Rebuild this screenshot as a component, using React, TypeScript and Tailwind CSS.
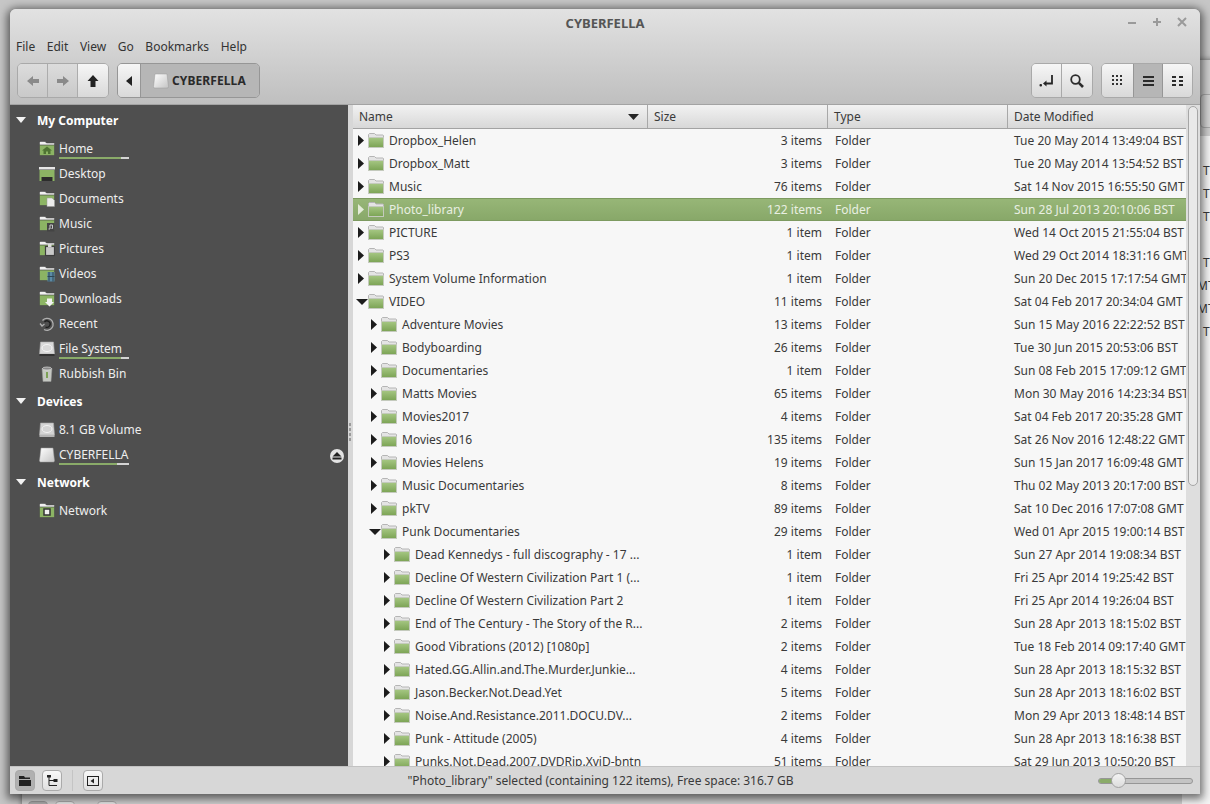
import type { ReactNode } from 'react';

type Row = { name: string; size: string; date: string; depth: number; open?: boolean; selected?: boolean };

const ROWS: Row[] = [
  { name: 'Dropbox_Helen', size: '3 items', date: 'Tue 20 May 2014 13:49:04 BST', depth: 0 },
  { name: 'Dropbox_Matt', size: '3 items', date: 'Tue 20 May 2014 13:54:52 BST', depth: 0 },
  { name: 'Music', size: '76 items', date: 'Sat 14 Nov 2015 16:55:50 GMT', depth: 0 },
  { name: 'Photo_library', size: '122 items', date: 'Sun 28 Jul 2013 20:10:06 BST', depth: 0, selected: true },
  { name: 'PICTURE', size: '1 item', date: 'Wed 14 Oct 2015 21:55:04 BST', depth: 0 },
  { name: 'PS3', size: '1 item', date: 'Wed 29 Oct 2014 18:31:16 GMT', depth: 0 },
  { name: 'System Volume Information', size: '1 item', date: 'Sun 20 Dec 2015 17:17:54 GMT', depth: 0 },
  { name: 'VIDEO', size: '11 items', date: 'Sat 04 Feb 2017 20:34:04 GMT', depth: 0, open: true },
  { name: 'Adventure Movies', size: '13 items', date: 'Sun 15 May 2016 22:22:52 BST', depth: 1 },
  { name: 'Bodyboarding', size: '26 items', date: 'Tue 30 Jun 2015 20:53:06 BST', depth: 1 },
  { name: 'Documentaries', size: '1 item', date: 'Sun 08 Feb 2015 17:09:12 GMT', depth: 1 },
  { name: 'Matts Movies', size: '65 items', date: 'Mon 30 May 2016 14:23:34 BST', depth: 1 },
  { name: 'Movies2017', size: '4 items', date: 'Sat 04 Feb 2017 20:35:28 GMT', depth: 1 },
  { name: 'Movies 2016', size: '135 items', date: 'Sat 26 Nov 2016 12:48:22 GMT', depth: 1 },
  { name: 'Movies Helens', size: '19 items', date: 'Sun 15 Jan 2017 16:09:48 GMT', depth: 1 },
  { name: 'Music Documentaries', size: '8 items', date: 'Thu 02 May 2013 20:17:00 BST', depth: 1 },
  { name: 'pkTV', size: '89 items', date: 'Sat 10 Dec 2016 17:07:08 GMT', depth: 1 },
  { name: 'Punk Documentaries', size: '29 items', date: 'Wed 01 Apr 2015 19:00:14 BST', depth: 1, open: true },
  { name: 'Dead Kennedys - full discography - 17 ...', size: '1 item', date: 'Sun 27 Apr 2014 19:08:34 BST', depth: 2 },
  { name: 'Decline Of Western Civilization Part 1 (...', size: '1 item', date: 'Fri 25 Apr 2014 19:25:42 BST', depth: 2 },
  { name: 'Decline Of Western Civilization Part 2', size: '1 item', date: 'Fri 25 Apr 2014 19:26:04 BST', depth: 2 },
  { name: 'End of The Century - The Story of the R...', size: '2 items', date: 'Sun 28 Apr 2013 18:15:02 BST', depth: 2 },
  { name: 'Good Vibrations (2012) [1080p]', size: '2 items', date: 'Tue 18 Feb 2014 09:17:40 GMT', depth: 2 },
  { name: 'Hated.GG.Allin.and.The.Murder.Junkie...', size: '4 items', date: 'Sun 28 Apr 2013 18:15:32 BST', depth: 2 },
  { name: 'Jason.Becker.Not.Dead.Yet', size: '5 items', date: 'Sun 28 Apr 2013 18:16:02 BST', depth: 2 },
  { name: 'Noise.And.Resistance.2011.DOCU.DV...', size: '2 items', date: 'Mon 29 Apr 2013 18:48:14 BST', depth: 2 },
  { name: 'Punk - Attitude (2005)', size: '4 items', date: 'Sun 28 Apr 2013 18:16:38 BST', depth: 2 },
  { name: 'Punks.Not.Dead.2007.DVDRip.XviD-bntn', size: '51 items', date: 'Sat 29 Jun 2013 10:50:20 BST', depth: 2 },
];

const PLACES = ['home', 'desktop', 'documents', 'music', 'pictures', 'videos', 'downloads', 'recent', 'filesystem', 'bin'] as const;

function FolderIcon({ className = '' }: { className?: string }) {
  return (
    <svg width="17" height="15" viewBox="0 0 17 15" className={className}>
      <defs>
        <linearGradient id="fg" x1="0" y1="0" x2="0" y2="1">
          <stop offset="0" stopColor="#a6c783" />
          <stop offset="1" stopColor="#7ba354" />
        </linearGradient>
      </defs>
      <path d="M0.5 14V1.5L1.5 .5H6.5L8 2H15L15.5 2.5V14Z" fill="#e4e4e4" stroke="#b5b5b5" />
      <rect x="0.5" y="4.5" width="15" height="10" fill="url(#fg)" stroke="#c4cabd" />
    </svg>
  );
}

// folder-shaped place icon with a small emblem on top
function PlaceFolder({ children }: { children?: ReactNode }) {
  return (
    <svg width="16" height="16" viewBox="0 0 16 16">
      <path d="M.5 14.5V1.5L1.5 .5H6L7.5 2H15.5V14.5Z" fill="#f0f0f0" stroke="#444" strokeOpacity=".5" />
      <rect x=".5" y="4" width="15" height="10.5" fill="#8cb464" stroke="#3d3d3d" strokeOpacity=".6" />
      {children}
    </svg>
  );
}

function PlaceIcon({ kind }: { kind: string }) {
  switch (kind) {
    case 'home':
      return <PlaceFolder><path d="M3 9.5L8 5.5L13 9.5H11.5V13H9V10.5H7V13H4.5V9.5Z" fill="#4f7433" /></PlaceFolder>;
    case 'desktop':
      return (
        <svg width="16" height="16" viewBox="0 0 16 16">
          <rect x="0" y="1" width="16" height="2.5" fill="#e6e6e6" />
          <rect x="0.5" y="4" width="15" height="11" fill="#8cb464" />
          <rect x="2.5" y="11" width="11" height="4" fill="#2c2c2c" />
        </svg>
      );
    case 'documents':
      return <PlaceFolder><path d="M8 7H13L15.5 9.5V15.5H8Z" fill="#ececec" stroke="#999" strokeWidth=".5" /></PlaceFolder>;
    case 'music':
      return <PlaceFolder><rect x="8" y="7" width="7.5" height="8.5" fill="#444" /><path d="M11 13V9H13.5M11 13H9.5M13.5 9V12.5H12.5" stroke="#c9c9c9" fill="none" /></PlaceFolder>;
    case 'pictures':
      return <PlaceFolder><rect x="6.5" y="5.5" width="9" height="9" fill="#c9c9c9" stroke="#3d3d3d" strokeWidth="1.2" /><rect x="9" y="3" width="3.5" height="3" fill="#ddd" /></PlaceFolder>;
    case 'videos':
      return <PlaceFolder><rect x="8.5" y="6" width="7" height="9.5" fill="#5b8aa5" /><path d="M10 6V15.5M14 6V15.5M8.5 10.5H15.5" stroke="#2f4654" /></PlaceFolder>;
    case 'downloads':
      return <PlaceFolder><path d="M8 7.5H13V11H15L10.5 15.5L6 11H8Z" fill="#f2f2f2" /></PlaceFolder>;
    case 'recent':
      return (
        <svg width="16" height="16" viewBox="0 0 16 16" fill="none" stroke="#b0b0b0" strokeWidth="1.3">
          <path d="M3.5 4.5A6 6 0 1 1 5 13.5" />
          <path d="M1 7.5L3 10L5.5 8" />
          <path d="M5.5 6A3.2 3.2 0 1 1 6.5 11" stroke="#1f1f1f" />
        </svg>
      );
    case 'filesystem':
      return (
        <svg width="16" height="16" viewBox="0 0 16 16">
          <path d="M1.5 1H14.5L15.5 13H.5Z" fill="#d9d9d9" stroke="#aaa" strokeWidth=".6" />
          <ellipse cx="8" cy="7" rx="5" ry="3.5" fill="none" stroke="#f5f5f5" />
          <rect x=".5" y="13" width="15" height="2" fill="#333" />
        </svg>
      );
    case 'bin':
      return (
        <svg width="16" height="16" viewBox="0 0 16 16">
          <path d="M3 2.5H13L12 15.5H4Z" fill="#c5c8c2" stroke="#999" strokeWidth=".5" />
          <ellipse cx="8" cy="2.5" rx="4.5" ry="1.5" fill="#888" stroke="#ddd" strokeWidth=".7" />
          <rect x="7" y="6" width="2" height="6" fill="#7da257" />
        </svg>
      );
    case 'drive':
      return (
        <svg width="16" height="16" viewBox="0 0 16 16">
          <path d="M1.5 1H14.5L15.5 13H.5Z" fill="#d4d4d4" stroke="#aaa" strokeWidth=".6" />
          <ellipse cx="8" cy="7" rx="5" ry="3.5" fill="none" stroke="#f2f2f2" />
          <rect x=".5" y="13" width="15" height="2" fill="#b5b5b5" />
        </svg>
      );
    case 'usb':
      return <UsbIcon />;
    default:
      return <PlaceFolder><rect x="5" y="6" width="6" height="6" fill="#f2f2f2" stroke="#333" strokeWidth="1.5" /></PlaceFolder>;
  }
}

function UsbIcon() {
  return (
    <svg width="16" height="16" viewBox="0 0 16 16">
      <defs>
        <linearGradient id="usb" x1="0" y1="0" x2="1" y2="1">
          <stop offset="0" stopColor="#ffffff" />
          <stop offset="1" stopColor="#c4c4c4" />
        </linearGradient>
      </defs>
      <path d="M2 1H14L15.5 13.5L15 15H1L.5 13.5Z" fill="url(#usb)" stroke="#999" strokeWidth=".5" />
    </svg>
  );
}

function Place({ kind, label, bar, eject }: { kind: string; label: string; bar?: [number, number]; eject?: boolean }) {
  return (
    <div className="flex h-[25px] items-center pl-[29px] pr-[4px]">
      <span className="flex w-[20px] shrink-0 items-center">
        <PlaceIcon kind={kind} />
      </span>
      <span className="relative leading-[18px]">
        {label}
        {bar && (
          <span className="absolute left-0 top-[17px] flex h-[2px] w-[70px]">
            <span className="bg-[#8aab69]" style={{ width: bar[0] }} />
            <span className="flex-1 bg-[#d4d4d4]" />
          </span>
        )}
      </span>
      {eject && (
        <span className="ml-auto mt-[2px] flex h-[14px] w-[14px] items-center justify-center rounded-full bg-[#e4e4e4]">
          <svg width="10" height="8" viewBox="0 0 10 8"><path d="M5 0L9.5 4.5H.5ZM.5 5.5H9.5V7.5H.5Z" fill="#222" /></svg>
        </span>
      )}
    </div>
  );
}

function Heading({ label }: { label: string }) {
  return (
    <div className="flex h-[28px] items-center pl-[7px] font-bold text-white">
      <svg width="10" height="6" viewBox="0 0 10 6" className="mr-[10px] ml-[-1px]"><path d="M0 0H10L5 6Z" fill="#f2f2f2" /></svg>
      <span className="ml-[1px] pt-[2px]">{label}</span>
    </div>
  );
}

function Sidebar() {
  const names: Record<string, string> = {
    home: 'Home', desktop: 'Desktop', documents: 'Documents', music: 'Music', pictures: 'Pictures',
    videos: 'Videos', downloads: 'Downloads', recent: 'Recent', filesystem: 'File System', bin: 'Rubbish Bin',
  };
  return (
    <aside className="w-[338px] shrink-0 bg-[#4f4f4f] pt-px text-[#eeeeee]">
      <Heading label="My Computer" />
      <div className="mb-px mt-[2px]">
        {PLACES.map((p) => (
          <Place key={p} kind={p} label={names[p]} bar={p === 'home' || p === 'filesystem' ? [62, 8] : undefined} />
        ))}
      </div>
      <Heading label="Devices" />
      <div className="mb-px mt-[2px]">
        <Place kind="drive" label="8.1 GB Volume" />
        <Place kind="usb" label="CYBERFELLA" bar={[58, 12]} eject />
      </div>
      <Heading label="Network" />
      <div className="mt-[2px]">
        <Place kind="network" label="Network" />
      </div>
    </aside>
  );
}

function HeaderCell({ label, className, children }: { label: string; className: string; children?: ReactNode }) {
  return (
    <div className={`flex h-full items-center border-r border-[#a8a8a8] pl-[6px] ${className}`}>
      <span>{label}</span>
      {children}
    </div>
  );
}

function FileRow({ row }: { row: Row }) {
  const arrow = row.selected ? '#e4ecd9' : '#1c1c1c';
  return (
    <div
      className={`flex h-[23px] shrink-0 items-center ${
        row.selected ? 'border-y border-[#7d9a60] bg-gradient-to-b from-[#97b677] to-[#88a869] text-[#e9efe2]' : ''
      }`}
    >
      <div className="flex w-[295px] shrink-0 items-center overflow-hidden whitespace-nowrap" style={{ paddingLeft: row.depth * 13 + 2 }}>
        <span className="flex w-[13px] shrink-0 justify-center">
          {row.open ? (
            <svg width="12" height="6" viewBox="0 0 12 6"><path d="M0 0H12L6 6Z" fill={arrow} /></svg>
          ) : (
            <svg width="6" height="11" viewBox="0 0 6 11" className="ml-[-1px]"><path d="M0 0L6 5.5L0 11Z" fill={arrow} /></svg>
          )}
        </span>
        <FolderIcon className="shrink-0" />
        <span className="ml-[4px]">{row.name}</span>
      </div>
      <div className="w-[180px] shrink-0 pr-[6px] text-right">{row.size}</div>
      <div className="w-[180px] shrink-0 pl-[7px]">Folder</div>
      <div className="min-w-0 flex-1 overflow-hidden whitespace-nowrap pl-[6px]">{row.date}</div>
    </div>
  );
}

function FileList() {
  return (
    <div className="flex min-w-0 flex-1 bg-[#f7f7f7]">
      <div className="flex min-w-0 flex-1 flex-col overflow-hidden">
        <div className="flex h-[24px] shrink-0 border-b border-[#a3a3a3] bg-gradient-to-b from-[#f2f2f2] to-[#d8d8d8]">
          <HeaderCell label="Name" className="w-[295px] pr-[8px]">
            <svg width="11" height="6" viewBox="0 0 11 6" className="ml-auto"><path d="M0 0H11L5.5 6Z" fill="#262626" /></svg>
          </HeaderCell>
          <HeaderCell label="Size" className="w-[180px]" />
          <HeaderCell label="Type" className="w-[180px]" />
          <HeaderCell label="Date Modified" className="flex-1 border-r-0" />
        </div>
        {ROWS.map((r) => (
          <FileRow key={r.name} row={r} />
        ))}
      </div>
      <div className="w-[14px] shrink-0 bg-[#dedede] px-[2px] pt-px">
        <div className="h-[380px] rounded-[5px] border border-[#a6a6a6] bg-[#e9e9e9]" />
      </div>
    </div>
  );
}

const toolBtn = 'flex h-full items-center justify-center bg-gradient-to-b from-[#f6f6f6] to-[#d9d9d9]';

function TriArrow({ d, fill }: { d: string; fill: string }) {
  return <svg width="14" height="14" viewBox="0 0 14 14"><path d={d} fill={fill} /></svg>;
}

function Toolbar() {
  return (
    <div className="flex h-[47px] items-start pl-[7px] pr-[7px] pt-[6px]">
      <div className="flex h-[35px] w-[92px] overflow-hidden rounded-[5px] border border-[#a9a9a9]">
        <div className="flex w-[30px] items-center justify-center border-r border-[#acacac] bg-gradient-to-b from-[#dcdcdc] to-[#c9c9c9]">
          <TriArrow d="M1 7L7 2V5H13V9H7V12Z" fill="#8a8a8a" />
        </div>
        <div className="flex w-[30px] items-center justify-center border-r border-[#acacac] bg-gradient-to-b from-[#dcdcdc] to-[#c9c9c9]">
          <TriArrow d="M13 7L7 2V5H1V9H7V12Z" fill="#8a8a8a" />
        </div>
        <div className={`${toolBtn} flex-1`}>
          <TriArrow d="M7 1L12.5 7H9.5V13H4.5V7H1.5Z" fill="#222222" />
        </div>
      </div>
      <div className="ml-[8px] flex h-[35px] w-[143px] overflow-hidden rounded-[5px] border border-[#969696]">
        <div className={`${toolBtn} w-[23px] border-r border-[#969696]`}>
          <svg width="6" height="10" viewBox="0 0 6 10"><path d="M6 0V10L0 5Z" fill="#222" /></svg>
        </div>
        <div className="flex flex-1 items-center bg-[#b6b6b6] pl-[12px] font-bold text-[#2a2a2a]">
          <span className="mr-[3px] flex"><UsbIcon /></span>
          <span className="pt-px tracking-[0.1px]">CYBERFELLA</span>
        </div>
      </div>
      <div className="ml-auto flex h-[35px] w-[62px] overflow-hidden rounded-[5px] border border-[#a9a9a9]">
        <div className={`${toolBtn} w-[30px] border-r border-[#a9a9a9]`}>
          <svg width="16" height="16" viewBox="0 0 16 16">
            <path d="M13 2V10.5H6" fill="none" stroke="#262626" strokeWidth="1.8" />
            <path d="M7.5 7.5V13.5L4 10.5Z" fill="#262626" />
            <rect x="0.5" y="11" width="2.5" height="2.5" rx="1" fill="#262626" />
          </svg>
        </div>
        <div className={`${toolBtn} flex-1`}>
          <svg width="14" height="14" viewBox="0 0 14 14" fill="none" stroke="#2c2c2c">
            <circle cx="5.5" cy="5.5" r="4.3" strokeWidth="1.8" />
            <path d="M8.8 8.8L13 13" strokeWidth="2.6" />
          </svg>
        </div>
      </div>
      <div className="ml-[8px] flex h-[35px] w-[92px] overflow-hidden rounded-[5px] border border-[#a9a9a9]">
        <div className={`${toolBtn} w-[31px]`}>
          <svg width="11" height="11" viewBox="0 0 11 11" fill="#333">
            {[0, 4, 8].flatMap((y) => [0, 4, 8].map((x) => <rect key={`${x}-${y}`} x={x} y={y} width="2" height="2" />))}
          </svg>
        </div>
        <div className="flex h-full w-[30px] items-center justify-center border-x border-[#969696] bg-[#b6b6b6]">
          <svg width="11" height="10" viewBox="0 0 11 10" fill="#2a2a2a"><rect width="11" height="2" /><rect y="4" width="11" height="2" /><rect y="8" width="11" height="2" /></svg>
        </div>
        <div className={`${toolBtn} flex-1`}>
          <svg width="11" height="10" viewBox="0 0 11 10" fill="#2a2a2a">
            {[0, 4, 8].flatMap((y) => [0, 7].map((x) => <rect key={`${x}-${y}`} x={x} y={y} width="4" height="2" />))}
          </svg>
        </div>
      </div>
    </div>
  );
}

function StatusBtn({ active, children }: { active?: boolean; children: ReactNode }) {
  return (
    <div
      className={`flex h-[21px] w-[20px] items-center justify-center rounded-[4px] border border-[#aaaaaa] ${
        active ? 'bg-[#b0b0b0]' : 'bg-gradient-to-b from-[#f8f8f8] to-[#e0e0e0]'
      }`}
    >
      {children}
    </div>
  );
}

function StatusBar() {
  return (
    <div className="flex h-[28px] shrink-0 items-center border-t border-[#c2c2c2] bg-[#d7d7d7] pl-[5px] pr-[7px]">
      <StatusBtn active>
        <svg width="12" height="10" viewBox="0 0 12 10" fill="#222"><path d="M0 0H5L6 1.5H11V3H0ZM0 4H12V10H0Z" /></svg>
      </StatusBtn>
      <div className="ml-[7px]">
        <StatusBtn>
          <svg width="12" height="12" viewBox="0 0 12 12" fill="none" stroke="#222"><path d="M3 1V10.5H11M3 5.5H8" /><rect x="1.5" y="0" width="3" height="2" fill="#222" /><rect x="8" y="4.5" width="3" height="2" fill="#222" /></svg>
        </StatusBtn>
      </div>
      <div className="ml-[10px] h-[21px] w-px bg-[#c4c4c4]" />
      <div className="ml-[10px]">
        <StatusBtn>
          <svg width="12" height="12" viewBox="0 0 12 12"><rect x=".5" y="1.5" width="11" height="9" fill="none" stroke="#222" /><path d="M7 3.5V8.5L3.5 6Z" fill="#222" /></svg>
        </StatusBtn>
      </div>
      <div className="flex-1 pt-px text-center">"Photo_library" selected (containing 122 items), Free space: 316.7 GB</div>
      <div className="flex h-[6px] w-[95px] overflow-hidden rounded-full border border-[#969696] bg-[#c4c4c4]">
        <span className="w-[14px] bg-[#8aab69]" />
      </div>
      <span className="ml-[-82px] mr-[67px] h-[15px] w-[15px] shrink-0 rounded-full border border-[#a3a3a3] bg-gradient-to-b from-[#f4f4f4] to-[#dcdcdc]" />
    </div>
  );
}

export default function App() {
  // last letters of the date column of the window behind
  const ghost: [string, number][] = [['', 21], ['T', 21], ['T', 21], ['T', 21], ['', 21], ['T', 21], ['MT', 15], ['MT', 15], ['T', 21]];
  return (
    <div className="relative h-[804px] w-[1210px] overflow-hidden bg-[#c6c6c6] text-[12px] text-[#3a3a3a]" style={{ fontFamily: '"Noto Sans", sans-serif' }}>
      {/* window behind, only its edge shows */}
      <div className="absolute left-[22px] top-[60px] h-[800px] w-[1300px] bg-[#cfcfcf] shadow-[0_0_6px_rgba(0,0,0,.5)]">
        <div className="absolute left-[1178px] top-[34px] h-[34px] w-[20px] rounded-[4px] border border-[#a9a9a9] bg-[#d4d4d4]" />
        <div className="absolute left-[1160px] top-[76px] w-[40px] bg-[#f4f4f4]">
          {ghost.map(([g, pl], i) => (
            <div key={i} className="flex h-[23px] items-center whitespace-nowrap" style={{ paddingLeft: pl }}>{g}</div>
          ))}
          <div className="h-[560px]" />
        </div>
        <div className="absolute left-[6px] top-[741px] h-[21px] w-[20px] rounded-[4px] border border-[#999] bg-[#aaa]" />
        <div className="absolute left-[33px] top-[741px] h-[21px] w-[20px] rounded-[4px] border border-[#aaa] bg-[#e4e4e4]" />
        <div className="absolute left-[75px] top-[741px] h-[21px] w-[20px] rounded-[4px] border border-[#aaa] bg-[#e4e4e4]" />
      </div>

      <div className="absolute left-[10px] top-[9px] flex h-[785px] w-[1190px] flex-col overflow-hidden rounded-t-[6px] bg-[#d7d7d7] shadow-[0_2px_9px_3px_rgba(0,0,0,.55)]">
        <div className="h-[95px] shrink-0 bg-gradient-to-b from-[#e2e2e2] to-[#bfbfbf]">
          <div className="relative flex h-[27px] items-center justify-center pt-[2px] text-[13px] font-bold text-[#555555]">
            CYBERFELLA
            <div className="absolute right-[12px] top-[8px] flex items-center gap-[13px]">
              <svg width="12" height="10" viewBox="0 0 12 10"><rect x="2" y="5" width="8" height="2" fill="#9a9a9a" /></svg>
              <svg width="12" height="10" viewBox="0 0 12 10"><path d="M2 5H10M6 1V9" stroke="#9a9a9a" strokeWidth="2" /></svg>
              <svg width="12" height="10" viewBox="0 0 12 10"><path d="M2 1L10 9M10 1L2 9" stroke="#9a9a9a" strokeWidth="2" /></svg>
            </div>
          </div>
          <div className="flex h-[21px] items-center gap-[11.6px] pl-[6px] text-[#333333]">
            {['File', 'Edit', 'View', 'Go', 'Bookmarks', 'Help'].map((m) => (
              <span key={m}>{m}</span>
            ))}
          </div>
          <Toolbar />
        </div>
        <div className="h-px shrink-0 bg-[#a3a3a3]" />
        <div className="flex min-h-0 flex-1">
          <Sidebar />
          <div className="flex w-[5px] shrink-0 flex-col items-start justify-center bg-[#d7d7d7] pb-[6px] pl-px">
            {[0, 1, 2, 3].map((i) => (
              <span key={i} className="mb-[2px] h-[3px] w-[2px] bg-[#9a9a9a]" />
            ))}
          </div>
          <FileList />
        </div>
        <StatusBar />
      </div>
    </div>
  );
}
